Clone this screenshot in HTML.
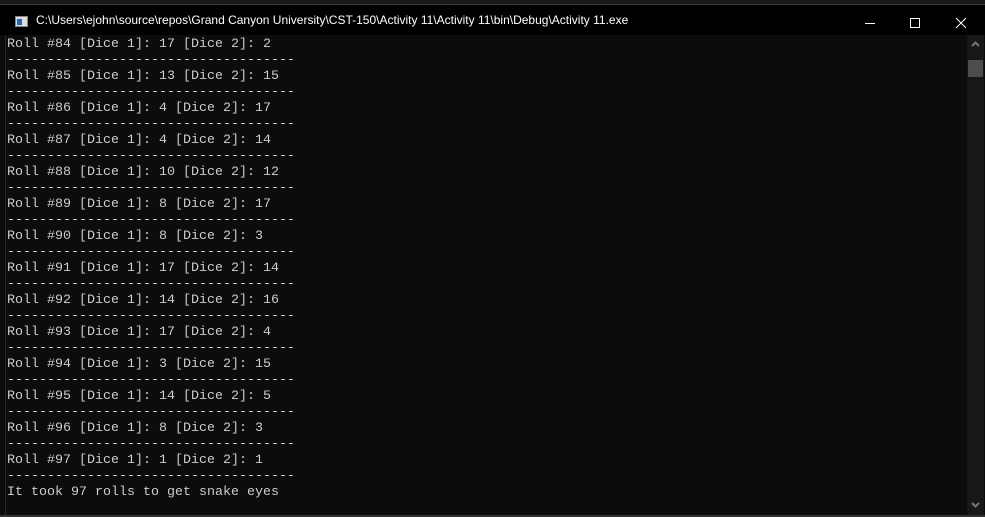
<!DOCTYPE html>
<html><head><style>
html,body{margin:0;padding:0;width:985px;height:517px;overflow:hidden;background:#1a1a1a;}
.win{position:absolute;left:0;top:4px;width:985px;height:512px;background:#0c0c0c;}
.title{position:absolute;left:0;top:4px;width:985px;height:31px;background:#000;border-top:1px solid #3a3a3a;box-sizing:border-box;}
.title .t{position:absolute;left:36px;top:8px;font:12px "Liberation Sans",sans-serif;color:#fff;white-space:nowrap;}
.icon{position:absolute;left:15px;top:11px;width:13px;height:11px;background:#ddd;border:1px solid #888;box-sizing:border-box;}
.icon:after{content:"";position:absolute;left:1px;top:2px;width:5px;height:6px;background:#2a6aa8;}
pre{position:absolute;left:7px;top:37px;margin:0;font:13.33px/16px "Liberation Mono",monospace;color:#cccccc;}
.sb{position:absolute;left:967px;top:35px;width:17px;height:480px;background:#171717;}
.thumb{position:absolute;left:968px;top:60px;width:15px;height:17px;background:#4d4d4d;}
.lb{position:absolute;left:5px;top:35px;width:1px;height:480px;background:#2a2a2a;}
.bb{position:absolute;left:0;top:515px;width:985px;height:2px;background:#333;}
</style></head><body>
<div class="win"></div>
<div class="title"><div class="icon"></div><div class="t">C:\Users\ejohn\source\repos\Grand Canyon University\CST-150\Activity 11\Activity 11\bin\Debug\Activity 11.exe</div>
<svg style="position:absolute;left:860px;top:8px" width="125" height="20">
<line x1="5" y1="10.5" x2="15" y2="10.5" stroke="#fff" stroke-width="1"/>
<rect x="50.5" y="5.5" width="9" height="9" fill="none" stroke="#fff"/>
<line x1="96" y1="5" x2="106" y2="15" stroke="#fff"/><line x1="106" y1="5" x2="96" y2="15" stroke="#fff"/>
</svg></div>
<div class="lb"></div>
<pre>Roll #84 [Dice 1]: 17 [Dice 2]: 2
------------------------------------
Roll #85 [Dice 1]: 13 [Dice 2]: 15
------------------------------------
Roll #86 [Dice 1]: 4 [Dice 2]: 17
------------------------------------
Roll #87 [Dice 1]: 4 [Dice 2]: 14
------------------------------------
Roll #88 [Dice 1]: 10 [Dice 2]: 12
------------------------------------
Roll #89 [Dice 1]: 8 [Dice 2]: 17
------------------------------------
Roll #90 [Dice 1]: 8 [Dice 2]: 3
------------------------------------
Roll #91 [Dice 1]: 17 [Dice 2]: 14
------------------------------------
Roll #92 [Dice 1]: 14 [Dice 2]: 16
------------------------------------
Roll #93 [Dice 1]: 17 [Dice 2]: 4
------------------------------------
Roll #94 [Dice 1]: 3 [Dice 2]: 15
------------------------------------
Roll #95 [Dice 1]: 14 [Dice 2]: 5
------------------------------------
Roll #96 [Dice 1]: 8 [Dice 2]: 3
------------------------------------
Roll #97 [Dice 1]: 1 [Dice 2]: 1
------------------------------------
It took 97 rolls to get snake eyes</pre>
<div class="sb"></div>
<div class="thumb"></div>
<svg style="position:absolute;left:967px;top:35px" width="17" height="480">
<polyline points="5,11 8.5,7.5 12,11" fill="none" stroke="#777" stroke-width="2"/>
<polyline points="5,468 8.5,471.5 12,468" fill="none" stroke="#777" stroke-width="2"/>
</svg>
<div class="bb"></div>
</body></html>
